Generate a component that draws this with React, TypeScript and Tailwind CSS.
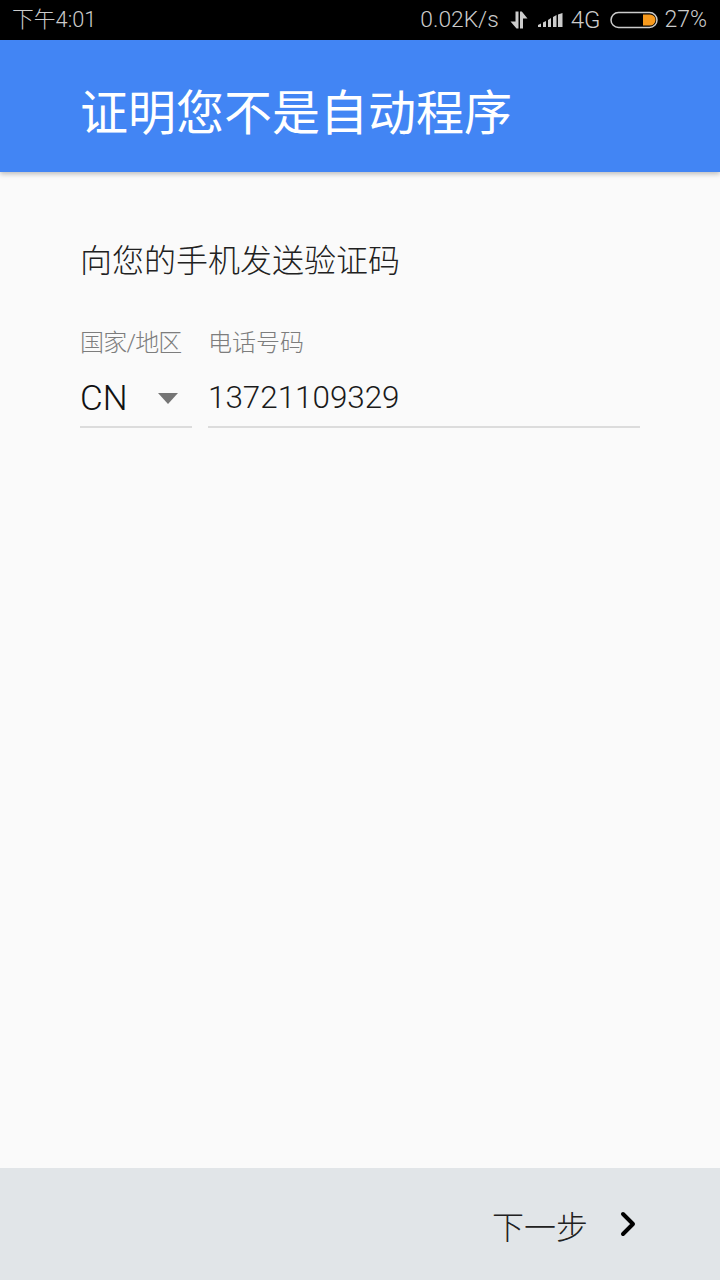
import React from 'react';

const font = { fontFamily: 'Roboto, "Noto Sans CJK SC", sans-serif' };

const StatusBar = () => (
  <div className="h-10 bg-black flex items-center justify-between pl-3 pr-[13px] text-[22px] text-[#cccccc] font-light shrink-0">
    <span className="text-[21.800px]">下午4:01</span>
    <div className="flex items-center">
      <span className="text-[22.800px]">0.02K/s</span>
      <svg className="ml-[11px]" width="18" height="18" viewBox="0 0 18 18" fill="#cccccc">
        <path d="M5.500 0.500h3v17H6.500L0.500 10.500h5z" />
        <path d="M10 0.500h1.800L17.500 7.500h-4.500V17.500h-3z" />
      </svg>
      <svg className="ml-[10px]" width="26" height="16" viewBox="0 0 26 16" fill="#cccccc">
        <path d="M0 13l3-1.500V15H0z" />
        <path d="M5 10.500l3-1.500v6H5z" />
        <path d="M10 8l3-2v9h-3z" />
        <path d="M15 5l3.500-2v12H15z" />
        <path d="M20 2.500L24.500 1v14H20z" />
      </svg>
      <span className="ml-[7px] text-[24px]">4G</span>
      <svg className="ml-[10px]" width="48" height="18" viewBox="0 0 48 18">
        <rect x="1" y="1.500" width="46" height="15" rx="7.500" fill="none" stroke="#cccccc" strokeWidth="1.500" />
        <path d="M33 3.500h7a5.500 5.500 0 0 1 0 11h-7z" fill="#f79a1e" />
      </svg>
      <span className="ml-[6px] text-[23px]">27%</span>
    </div>
  </div>
);

const App = () => {
  return (
    <div className="w-[720px] h-[1280px] flex flex-col bg-[#fafafa]" style={font}>
      <StatusBar />
      <header className="h-[132px] bg-[#4285f4] flex items-center pl-[80px] pt-4 shadow-[0_2px_5px_rgba(0,0,0,0.25)] shrink-0 relative">
        <h1 className="text-[48px] font-normal text-white leading-none">证明您不是自动程序</h1>
      </header>

      <main className="flex-1 pl-[81px] pr-20 pt-[71px]">
        <p className="text-[32px] leading-9 text-[#212121] font-light -ml-px">向您的手机发送验证码</p>
        <div className="flex gap-4 mt-[49px] -ml-px">
          <div className="w-[112px]">
            <label className="block text-[24px] tracking-[-0.8px] leading-[30px] text-[#7d7d7d] font-light whitespace-nowrap">国家/地区</label>
            <div className="h-[56px] mt-[14px] flex items-center justify-between border-b-2 border-[#dcdcdc] pr-[14px] pb-[2px]">
              <span className="text-[35px] leading-none text-[#111111] font-light">CN</span>
              <span className="w-0 h-0 border-l-[10px] border-r-[10px] border-t-[11px] border-l-transparent border-r-transparent border-t-[#757575]" />
            </div>
          </div>
          <div className="flex-1">
            <label className="block text-[24px] leading-[30px] text-[#7d7d7d] font-light">电话号码</label>
            <div className="h-[56px] mt-[14px] flex items-center border-b-2 border-[#dcdcdc] pb-[2px]">
              <span className="text-[31.400px] text-[#1a1a1a] font-light">13721109329</span>
            </div>
          </div>
        </div>
      </main>

      <footer className="h-28 bg-[#e1e5e8] flex items-center justify-end pr-[82px] shrink-0">
        <span className="text-[32px] text-[#212121] font-light pt-2">下一步</span>
        <svg className="ml-[32px]" width="18" height="26" viewBox="0 0 18 26" fill="none" stroke="#000" strokeWidth="4" strokeLinecap="round" strokeLinejoin="round">
          <path d="M3 3l10 10L3 23" />
        </svg>
      </footer>
    </div>
  );
};

export default App;
